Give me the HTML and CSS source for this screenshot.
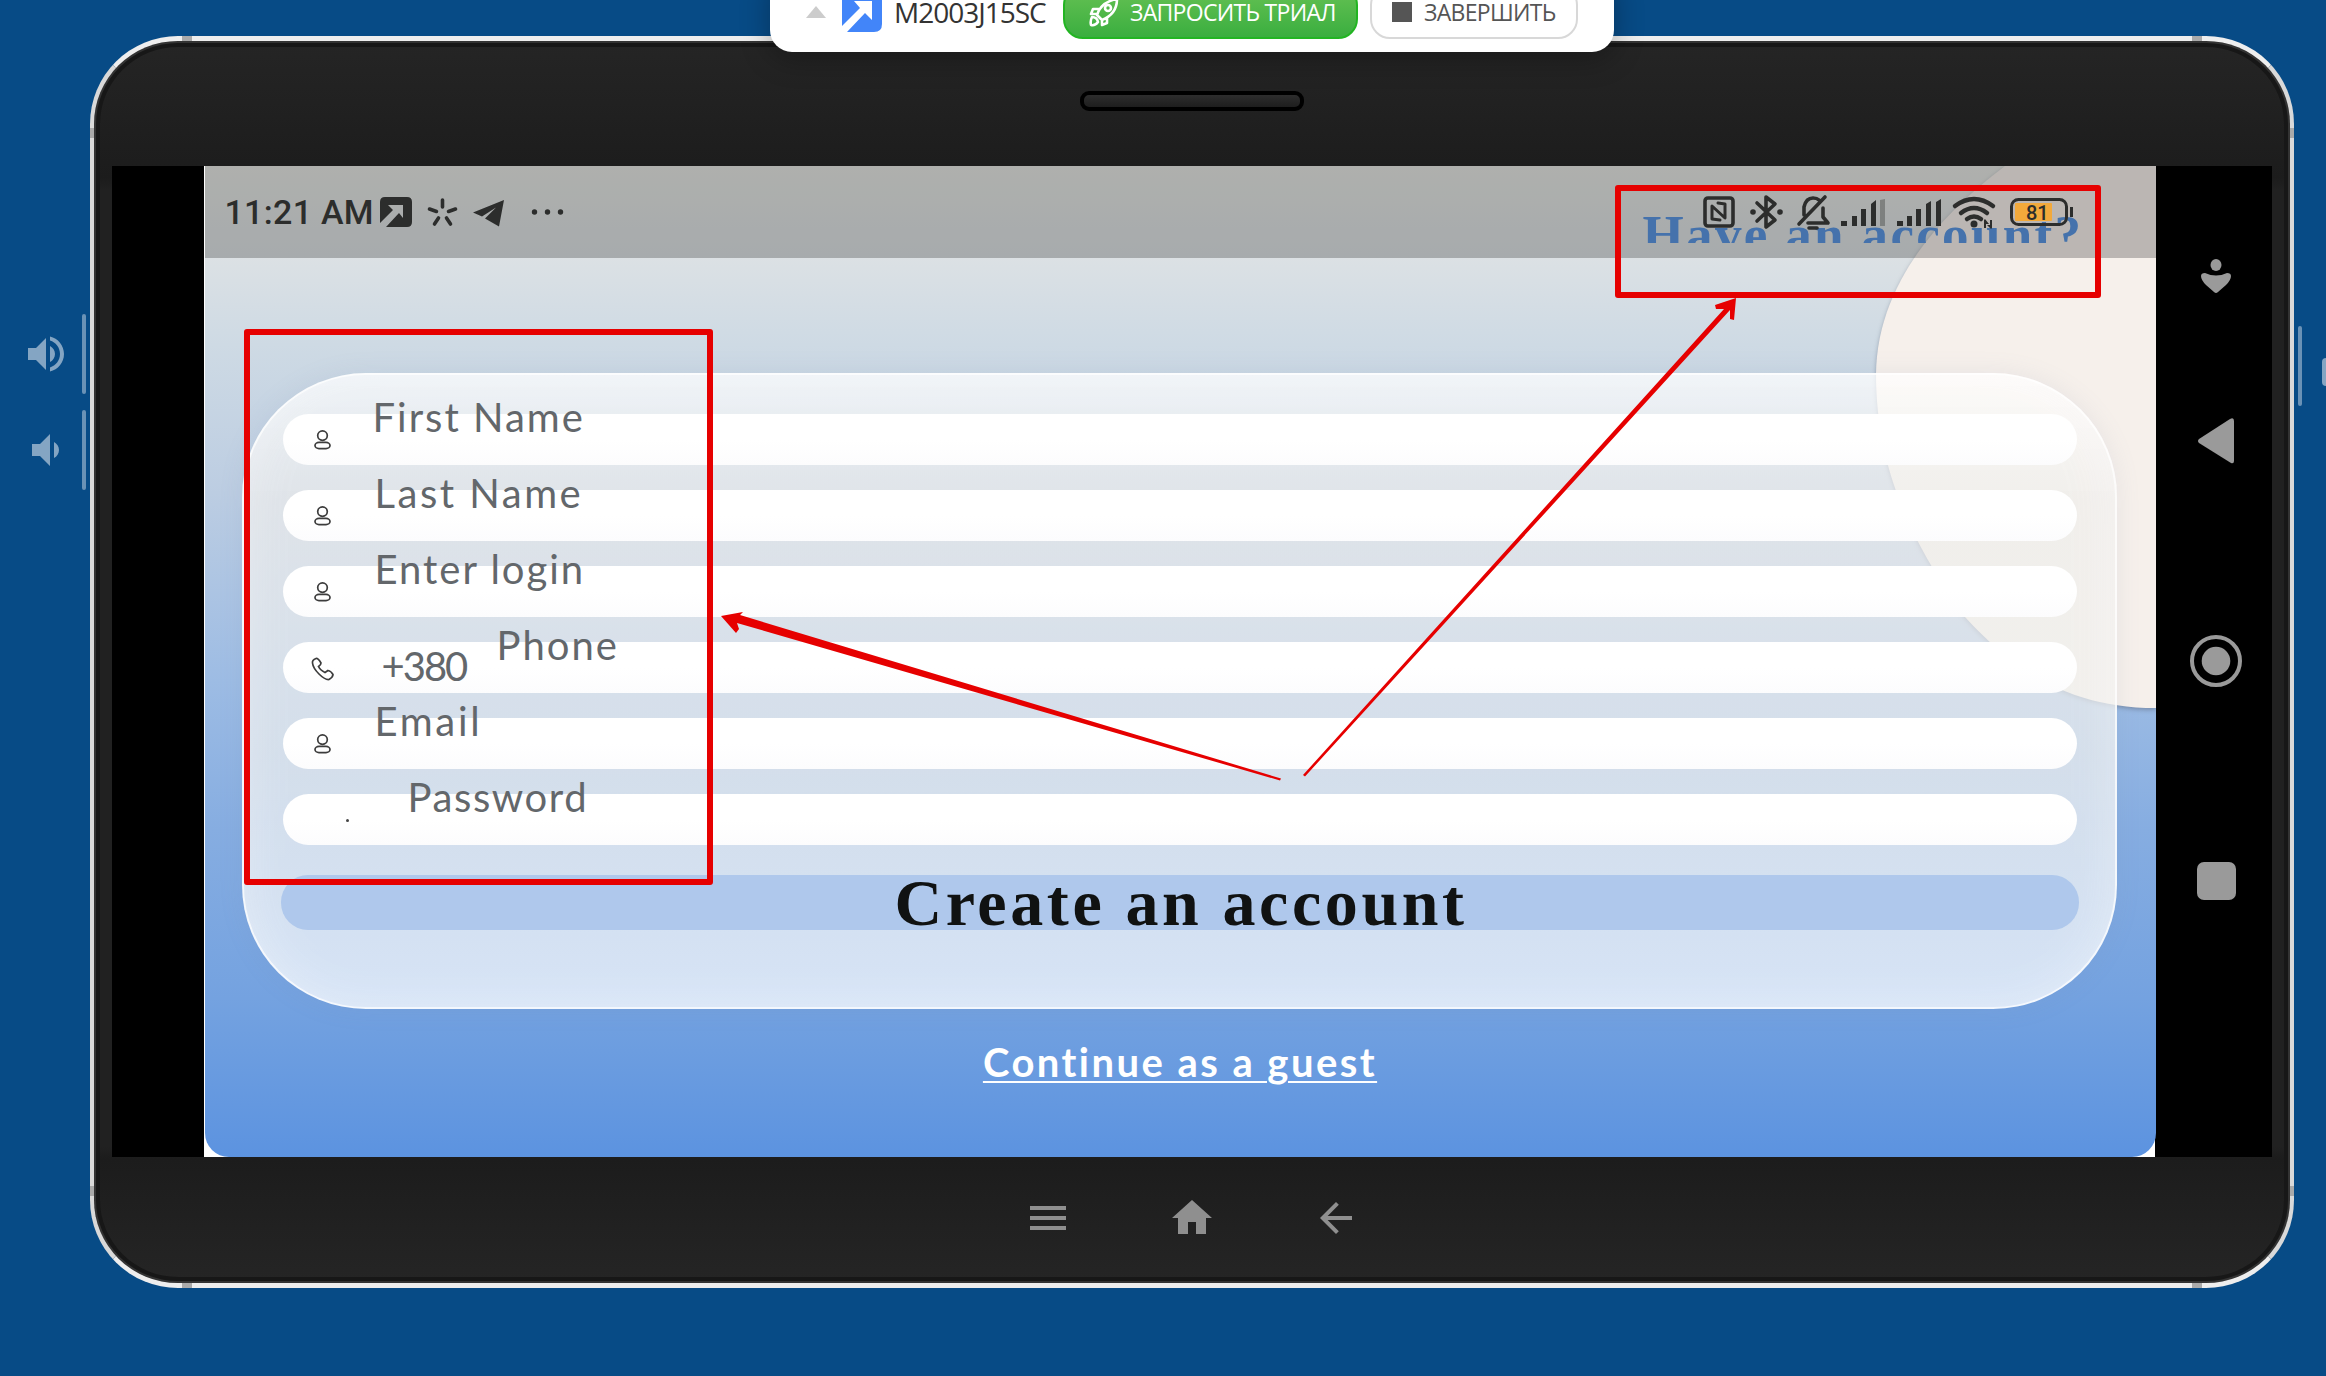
FILE: index.html
```html
<!DOCTYPE html>
<html lang="ru">
<head>
<meta charset="utf-8">
<title>M2003J15SC</title>
<link rel="stylesheet" href="styles.css">
</head>
<body>
<svg width="0" height="0" class="defs">
  <symbol id="user" viewBox="0 0 23 24"><ellipse cx="11.5" cy="6.6" rx="4.8" ry="4.7"/><rect x="4" y="13.4" width="15" height="6.2" rx="4" ry="3.1"/></symbol>
</svg>
<div class="desk">
  <aside class="rail rail-left">
    <div class="key"><svg class="glyph" viewBox="0 0 24 24"><path d="M3 9v6h4l5 5V4L7 9H3zm13.500 3c0-1.770-1.020-3.290-2.500-4.030v8.050c1.480-.73 2.500-2.250 2.500-4.020zM14 3.230v2.060c2.890.86 5 3.540 5 6.710s-2.110 5.850-5 6.710v2.060c4.010-.91 7-4.490 7-8.770s-2.990-7.860-7-8.770z"/></svg><i class="tick"></i></div>
    <div class="key"><svg class="glyph" viewBox="0 0 24 24"><path d="M18.500 12c0-1.770-1.020-3.290-2.500-4.030v8.050c1.480-.73 2.500-2.250 2.500-4.020zM5 9v6h4l5 5V4L9 9H5z"/></svg><i class="tick"></i></div>
  </aside>

  <main class="device">
    <i class="seam t l"></i><i class="seam t r"></i><i class="seam b l"></i><i class="seam b r"></i>
    <i class="seam v l up"></i><i class="seam v l down"></i><i class="seam v r up"></i><i class="seam v r down"></i>
    <header class="bezel-top"><div class="speaker"></div></header>
    <section class="screen">
      <div class="app">
        <svg class="blob" viewBox="0 0 1951 991"><path d="M1800 0C1740 45 1672 115 1671 208C1671 300 1705 375 1760 451C1805 500 1860 542 1951 542V0Z"/></svg>
        <div class="signin"><span>Have an account?</span></div>
        <div class="status">
          <span class="clock">11:21 AM</span>
          <svg class="status-left" viewBox="375 190 200 44">
            <path fill-rule="evenodd" d="M385 197h22q5 0 5 5v20q0 5-5 5h-21l13-14 4 5V205h-15l5 5-13 13V202q0-5 5-5z"/>
            <g class="ray"><path d="M442.500 200v7M429.500 209l7 2.500M455.500 209l-7 2.500M438.500 218l-4 6M446.500 218l4 6"/></g>
            <path d="M504 200L473 212.500l9 4 14-9-11 11 14 8z"/>
            <circle cx="534.500" cy="212" r="2.700"/><circle cx="547.500" cy="212" r="2.700"/><circle cx="560.500" cy="212" r="2.700"/>
          </svg>
          <svg class="status-right" viewBox="1695 188 390 48">
            <g class="line"><rect x="1705" y="198" width="28" height="28" rx="3"/><path d="M1720 220l-8-1V206l13 12V204l-7-1" stroke-width="3"/>
            <path d="M1757 203l18 17-9 7V197l9 7-18 17"/><path d="M1799 224l26-27M1804 215v-8q2-9 9-9 4 0 6 2M1823 208v9l5 6h-20M1809 228h8"/></g>
            <circle cx="1753" cy="212" r="2.800"/><circle cx="1780" cy="212" r="2.800"/>
            <path d="M1841 226v-5h6v5zM1852 226v-10h5v10zM1861 226v-17h5v17zM1871 226v-22l5-4v26zM1897 226v-5h6v5zM1907 226v-10h5v10zM1916 226v-17h5v17zM1926 226v-22l5-3v25zM1936 226v-24l5-3v27z"/>
            <path opacity=".35" d="M1880 226v-26l5-1v27z"/>
            <g class="wave"><path d="M1955 206q19-14 38 0M1961 213q13-10 26 0M1967 219q7-5 14 0"/></g><circle cx="1974" cy="224" r="3.500"/>
            <path d="M1985 219l4 5h-3v4h-2v-8zM1991 229l-4-4h3v-5h2v8z"/>
            <rect x="2015" y="203" width="37" height="18" rx="1" fill="#f2a93b"/><rect x="2011.500" y="199.500" width="55" height="25" rx="7" fill="none" stroke="#2c2d2c" stroke-width="3"/><path d="M2070 207h3v10h-3z"/>
            <text x="2026" y="220" class="charge">81</text>
          </svg>
        </div>
        <form class="card">
          <div class="field"><svg class="ico"><use href="#user"/></svg><label class="l1">First Name</label></div>
          <div class="field"><svg class="ico"><use href="#user"/></svg><label class="l2">Last Name</label></div>
          <div class="field"><svg class="ico"><use href="#user"/></svg><label class="l3">Enter login</label></div>
          <div class="field"><svg class="ico" viewBox="0 0 23 24"><path d="M1.500 6Q1 3 5 1.500Q7 1 10 6Q10 8 7.500 9.500Q9 13 14 15.500L17 13.500Q20 14 22 17.500Q22 20 18 22.500Q14 23 8 17Q2 11 1.500 6Z"/></svg><span class="code">+380</span><label class="l4">Phone</label></div>
          <div class="field"><svg class="ico"><use href="#user"/></svg><label class="l5">Email</label></div>
          <div class="field"><i class="speck"></i><label class="l6">Password</label></div>
          <button class="create" type="button">Create an account</button>
        </form>
        <a class="guest">Continue as a guest</a>
      </div>
      <nav class="navbar">
        <svg viewBox="2155 166 117 991">
          <ellipse cx="2215" cy="265" rx="5.500" ry="6"/><path d="M2200 276q0-3 4-3 11 5 22 0 4 0 4 3 0 4-5 9l-8 7q-2 2-4 0l-8-7q-5-5-5-9z"/>
          <path d="M2198 439q-2 2 0 4l32 20q3 1 3-2V421q0-4-4-2z"/>
          <circle cx="2215" cy="661" r="24" fill="none" stroke="#9a9a9a" stroke-width="4"/><circle cx="2215" cy="661" r="14.300"/>
          <rect x="2196" y="862" width="39" height="38" rx="7"/>
        </svg>
      </nav>
    </section>
    <footer class="bezel-bottom">
      <svg viewBox="0 0 24 24"><path d="M3 18h18v-2H3v2zm0-5h18v-2H3v2zm0-7v2h18V6H3z"/></svg>
      <svg viewBox="0 0 24 24"><path d="M10 20v-6h4v6h5v-8h3L12 3 2 12h3v8z"/></svg>
      <svg viewBox="0 0 24 24"><path d="M20 11H7.830l5.590-5.590L12 4l-8 8 8 8 1.410-1.410L7.830 13H20v-2z"/></svg>
    </footer>
  </main>

  <aside class="rail rail-right"><i class="tick"></i><i class="stub"></i></aside>
</div>

<div class="toolbar">
  <svg class="caret" viewBox="0 0 20 12"><path d="M0 12L10 0l10 12z"/></svg>
  <svg class="logo" viewBox="0 0 40 40"><path fill="#4285f9" d="M0 0h40v32q0 8-8 8H5l18-19 7 7V9H12l6 7L0 34z"/></svg>
  <span class="model">M2003J15SC</span>
  <button class="trial"><svg class="rocket" viewBox="0 0 30 30"><path d="M8 18Q12 5 28 2Q28 17 13 23ZM11 12L4 12 2 17 8 17M18 20L18 26 13 28 13 22M3 20Q8 20 9 25Q6 29 2 28Q1 24 3 20Z"/><circle cx="19" cy="11" r="3"/></svg><span>ЗАПРОСИТЬ ТРИАЛ</span></button>
  <button class="finish"><i></i><span>ЗАВЕРШИТЬ</span></button>
</div>

<svg class="notes" viewBox="0 0 2326 1376">
  <rect x="247" y="332" width="463" height="550"/><rect x="1618" y="188" width="480" height="107"/>
  <path d="M1281 778.500L740 615l3-3-22 4 15 17 3-4-2-6L1280 780.500z"/>
  <path d="M1305 776.500L1730 310l0 9 4 1 2-22-21 7 1 4 8 0L1303 775z"/>
</svg>
</body>
</html>
```
FILE: styles.css
```css
* { box-sizing: border-box; }
body { margin: 0; width: 2326px; height: 1376px; overflow: hidden; position: relative; background: #074b86; font-family: "Open Sans", sans-serif; }
svg { display: block; flex: none; }
.defs { position: absolute; }
button { font: inherit; border: 0; background: none; padding: 0; margin: 0; white-space: nowrap; }
.desk { display: flex; height: 1376px; padding-top: 36px; }

.rail { flex: none; }
.rail-left { width: 90px; padding-top: 278px; display: flex; flex-direction: column; gap: 16px; }
.key { display: flex; height: 80px; align-items: center; padding-left: 22px; gap: 12px; }
.glyph { width: 48px; height: 48px; fill: #84a5c3; }
.tick { display: block; flex: none; width: 4px; height: 80px; border-radius: 2px; background: #6a92b6; }
.rail-right { width: 32px; padding: 290px 0 0 4px; display: flex; gap: 20px; }
.stub { width: 16px; height: 28px; margin-top: 32px; flex: none; border-radius: 4px; background: #84a5c3; }

.device { position: relative; flex: none; width: 2204px; height: 1252px; border: 4px solid #d9d9d9; border-top: 5px solid #eee; border-bottom: 5px solid #eee; border-radius: 88px; display: flex; flex-direction: column; padding: 0 18px;
  background: linear-gradient(#252525, #1c1c1c 11%, #212121 12%, #212121 89%, #1c1c1c 90%, #252525); box-shadow: inset 0 0 0 2px #333, inset 0 0 0 6px #171717; }
.seam { position: absolute; background: #aaa; }
.seam.t, .seam.b { width: 10px; height: 5px; }
.seam.t { top: -5px; } .seam.b { bottom: -5px; }
.seam.t.l, .seam.b.l { left: 88px; } .seam.t.r, .seam.b.r { right: 88px; }
.seam.v { width: 4px; height: 10px; }
.seam.v.l { left: -4px; } .seam.v.r { right: -4px; }
.seam.up { top: 87px; } .seam.down { bottom: 87px; }
.bezel-top { height: 125px; padding-top: 50px; }
.speaker { width: 224px; height: 20px; margin: 0 auto; border: 4px solid #000; border-radius: 9px; background: linear-gradient(#2d2d2d, #1e1e1e); }
.screen { display: flex; height: 991px; padding-left: 92.5px; background: linear-gradient(90deg, #000 0 92.5px, #fff 92.5px 2043.500px, #000 2043.500px); }
.bezel-bottom { display: flex; justify-content: center; gap: 96px; padding-top: 37px; }
.bezel-bottom svg { width: 48px; height: 48px; fill: #8f8f8f; }

.app { position: relative; flex: none; width: 1951px; height: 991px; display: flex; flex-direction: column; align-items: center; overflow: hidden; border-radius: 0 0 24px 24px;
  background: linear-gradient(#e6e8e4 0, #dce1e4 9%, #cedae4 18%, #bccde2 33%, #9dbce4 52%, #86ade1 67%, #74a2e0 84%, #5c93e0 100%); }
.blob { position: absolute; inset: 0; width: 1951px; height: 991px; fill: #f6f0eb; filter: drop-shadow(0 2px 2px rgba(90,100,120,.5)); }
.signin { position: absolute; top: 38px; left: 1438px; height: 39px; overflow: hidden; font: bold 53px/60px "Liberation Serif", serif; color: #5b96e2; white-space: nowrap; letter-spacing: 2.350px; }
.status { position: relative; width: 100%; height: 91.700px; flex: none; display: flex; justify-content: space-between; padding: 22px 71px 0 20px; background: rgba(0,0,0,.24); }
.status svg { fill: #2c2d2c; }
.status-left { width: 200px; height: 44px; margin: 2px auto 0 4px; }
.status-right { width: 390px; height: 48px; }
.clock { font: 500 34px/48px Roboto, sans-serif; color: #2c2d2c; width: 146px; letter-spacing: .3px; white-space: nowrap; }
.ray path, .line, .wave path { fill: none; stroke: #2c2d2c; stroke-width: 3.600px; stroke-linecap: round; stroke-linejoin: round; }
.wave path { stroke-width: 4.500px; }
.charge { font: 500 20px Roboto, sans-serif; }

.card { flex: none; width: 1875px; height: 636px; margin-top: 115px; margin-left: -1px; padding: 39px 37px 0; border: 2px solid rgba(255,255,255,.75); border-radius: 124px; display: flex; flex-direction: column; align-items: center; gap: 25px;
  position: relative; background: linear-gradient(rgba(255,255,255,.68), rgba(238,237,235,.7) 20%, rgba(240,240,238,.7) 60%, rgba(255,255,255,.7)); box-shadow: inset 0 0 50px rgba(255,255,255,.35), 0 0 24px rgba(120,140,170,.12); }
.field { flex: none; width: 1794px; height: 51.100px; border-radius: 26px; background: linear-gradient(#fff 50%, #fcfcfd); display: flex; align-items: flex-start; padding-left: 28px; font: 400 40px/51px Lato, sans-serif; color: #63676b; white-space: nowrap; }
.ico { width: 23px; height: 24px; margin-top: 15px; margin-right: 39px; fill: none; stroke: #3c3c3c; stroke-width: 1.700px; }
.field:nth-child(4) .ico { margin-top: 15px; margin-right: 48px; }
.field label { margin-top: -22px; letter-spacing: 2px; }
.l2, .l3, .l5 { padding-left: 2px; }
.field .l2 { letter-spacing: 2.500px; }
.field .l5 { letter-spacing: 2.700px; }
.field .l6 { letter-spacing: 1.600px; }
.code { width: 115px; margin-top: -1px; letter-spacing: -2px; }
.speck { width: 3px; height: 3px; margin: 25px 59px 0 35px; border-radius: 50%; background: #444; }
.create { flex: none; width: 1798px; height: 55px; margin-top: 5px; border-radius: 27px; background: #afc8ec; font: bold 66px/56px "Liberation Serif", serif; color: #101212; letter-spacing: 3.600px; text-indent: 3px; }
.guest { margin-top: 27px; font: bold 40px/52px Lato, sans-serif; color: #fff; text-decoration: underline; text-decoration-thickness: 2px; text-underline-offset: 4px; letter-spacing: 2.450px; position: relative; }
.navbar svg { width: 117px; height: 991px; fill: #9a9a9a; }

.toolbar { position: absolute; top: -29px; left: 770px; width: 844px; height: 81px; padding: 0 36px; display: flex; align-items: center; background: #fff; border-radius: 22px; box-shadow: 0 6px 30px rgba(0,0,0,.3); }
.caret { width: 20px; height: 12px; fill: #ccc; }
.logo { width: 40px; height: 40px; margin: 0 12px 0 16px; }
.model { width: 169px; font-size: 28px; color: #333; white-space: nowrap; letter-spacing: -1px; }
.trial, .finish { display: flex; align-items: center; height: 54px; border-radius: 20px; flex: none; font-size: 23px; letter-spacing: -.7px; }
.trial { width: 295px; padding-left: 24px; gap: 11px; color: #fff; background: linear-gradient(#67c254, #3aae3f); border: 2px solid #22b522; }
.rocket { width: 30px; height: 30px; fill: none; stroke: #fff; stroke-width: 2.600px; stroke-linejoin: round; }
.finish { width: 208px; margin-left: 12px; padding-left: 20px; gap: 12px; color: #555; border: 2px solid #d8d8d8; }
.finish i { width: 20px; height: 20px; background: #555; }
.notes { position: absolute; inset: 0; width: 2326px; height: 1376px; fill: #e60000; pointer-events: none; }
.notes rect { fill: none; stroke: #e60000; stroke-width: 6px; stroke-linejoin: round; }
```
